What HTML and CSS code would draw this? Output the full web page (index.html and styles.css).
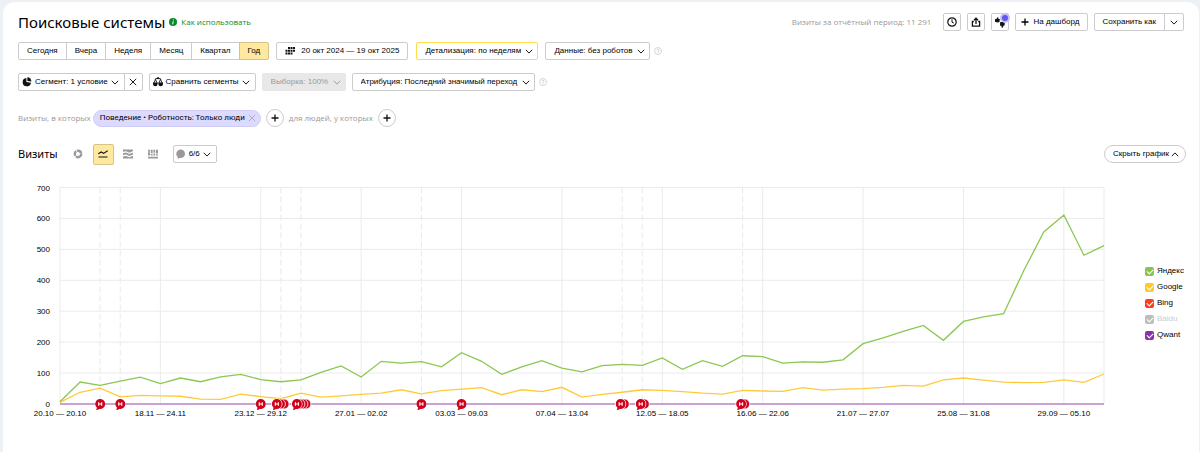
FILE: index.html
```html
<!DOCTYPE html>
<html lang="ru">
<head>
<meta charset="utf-8">
<title>Поисковые системы</title>
<link rel="stylesheet" href="styles.css">
</head>
<body>
<svg class="defs" aria-hidden="true">
  <symbol id="chevron" viewBox="0 0 8 5"><path d="M.8.8 4 4.1 7.2.8" fill="none" stroke="currentColor" stroke-width=".9"/></symbol>
  <symbol id="cross" viewBox="0 0 8 8"><path d="M.8.8l6.4 6.4M7.2.8.8 7.2" fill="none" stroke="currentColor" stroke-width=".9"/></symbol>
  <symbol id="plus" viewBox="0 0 8 8"><path d="M4 .5v7M.5 4h7" fill="none" stroke="currentColor" stroke-width="1.3"/></symbol>
  <symbol id="help" viewBox="0 0 8 8"><circle cx="4" cy="4" r="3.5" fill="none" stroke="#ccc" stroke-width=".8"/><path d="M2.9 3.2c.1-1.4 2.2-1.2 2.1 0 0 .8-1 .8-1 1.6M4 5.3v.8" fill="none" stroke="#bbb" stroke-width=".7"/></symbol>
  <symbol id="note" viewBox="-5 -5 10 12"><path d="M-5 0a5 5 0 1 1 4 4.900q-1 1.100-3 1.100l.8-2.300a5 5 0 0 1-1.800-3.700z" fill="#d0021b"/><path d="M-1.500-1.700v3.400M1.500-1.700v3.400M-1.500 0h3" stroke="#fff" stroke-width="1.100"/></symbol>
</svg>
<main class="card">
  <header class="header">
    <h1 class="title">Поисковые системы</h1>
    <a class="howto" href="#"><svg class="icon-info" viewBox="0 0 8 8"><circle cx="4" cy="4" r="4" fill="#098a28"/><path d="M4.500 1.500l-.1.900M4.200 3.300 3.700 6.300" stroke="#fff" stroke-width="1"/></svg>Как использовать</a>
    <div class="actions">
      <span class="period">Визиты за отчётный период: 11 291</span>
      <button class="btn square" aria-label="История"><svg class="icon10" viewBox="0 0 10 10"><circle cx="5" cy="5" r="4.200" fill="none" stroke="#111" stroke-width="1.200"/><path d="M5 2.300V5.200l1.800.8" fill="none" stroke="#111"/></svg></button>
      <button class="btn square" aria-label="Поделиться"><svg class="icon10" viewBox="0 0 10 10"><path d="M2.800 4.500H1.400v4.700h7.200V4.500H7.200M5 7V1.800M3 3.200l2-2 2 2" fill="none" stroke="#111" stroke-width="1.300"/></svg></button>
      <button class="btn square rate" aria-label="Оценить"><svg class="icon12" viewBox="0 0 12 12"><path d="M1 3.300 2.600 2.800 3.400 1.200l1 .3v1.400h1.400l-.3 3-1.800.5L1 5.800z" fill="#111"/><path d="M6.200 6h4.500v3.200L9.500 9.800l-.8 1.900-1.200-.3V9.700H6z" fill="#111"/></svg><span class="badge"></span></button>
      <button class="btn dash"><svg class="icon8"><use href="#plus"/></svg>На дашборд</button>
      <div class="joined"><button class="btn save">Сохранить как</button><button class="btn arrow" aria-label="Варианты сохранения"><svg class="chev"><use href="#chevron"/></svg></button></div>
    </div>
  </header>

  <div class="row">
    <div class="joined tabs">
      <button class="btn">Сегодня</button><button class="btn">Вчера</button><button class="btn">Неделя</button><button class="btn">Месяц</button><button class="btn">Квартал</button><button class="btn active">Год</button>
    </div>
    <button class="btn dates"><svg class="icon10" viewBox="0 0 10 8"><path d="M3 0h2v2H3zM5.500 0h2v2h-2zM8 0h2v2H8zM.5 2.700h2v2h-2zM3 2.700h2v2H3zM5.500 2.700h2v2h-2zM8 2.700h2v2H8zM.5 5.400h2v2h-2zM3 5.400h2v2H3zM5.500 5.400h2v2h-2z" fill="#111"/></svg>20 окт 2024 — 19 окт 2025</button>
    <span class="drop accent"><select aria-label="Детализация"><option>Детализация: по неделям</option></select><svg class="chev"><use href="#chevron"/></svg></span>
    <span class="drop"><select aria-label="Данные"><option>Данные: без роботов</option></select><svg class="chev"><use href="#chevron"/></svg></span>
    <svg class="icon8 help"><use href="#help"/></svg>
  </div>

  <div class="row second">
    <div class="joined">
      <button class="btn segment"><svg class="icon10" viewBox="0 0 10 10"><path d="M4.400 1A4.200 4.200 0 1 0 9 5.800L4.400 5z" fill="#111"/><path d="M5.400.2A4 4 0 0 1 9.300 4.600L5.400 4z" fill="#111"/></svg>Сегмент: 1 условие<svg class="chev"><use href="#chevron"/></svg></button><button class="btn clear" aria-label="Сбросить"><svg class="icon8"><use href="#cross"/></svg></button>
    </div>
    <button class="btn compare"><svg class="icon10" viewBox="0 0 10 10"><path d="M2.500 2.400 .8 6.200M2.500 2.400l1.600 3.800M7.500 2.400 5.900 6.200M7.500 2.400l1.700 3.800" fill="none" stroke="#111" stroke-width=".9"/><path d="M1.800 2.300 5 1l3.200 1.300" fill="none" stroke="#111" stroke-width="1"/><circle cx="5" cy="1.200" r="1" fill="#111"/><path d="M0 5.600h4.600v1.400a2.300 2.300 0 0 1-4.600 0zM5.400 5.600H10v1.400a2.300 2.300 0 0 1-4.600 0z" fill="#111"/></svg>Сравнить сегменты<svg class="chev"><use href="#chevron"/></svg></button>
    <span class="drop off"><select aria-label="Выборка" disabled><option>Выборка: 100%</option></select><svg class="chev"><use href="#chevron"/></svg></span>
    <span class="drop"><select aria-label="Атрибуция"><option>Атрибуция: Последний значимый переход</option></select><svg class="chev"><use href="#chevron"/></svg></span>
    <svg class="icon8 help"><use href="#help"/></svg>
  </div>

  <div class="row filters">
    <span>Визиты, в которых</span>
    <span class="chip">Поведение • Роботность: Только люди<button class="chip-close" aria-label="Удалить условие"><svg class="icon8"><use href="#cross"/></svg></button></span>
    <button class="round" aria-label="Добавить условие"><svg class="icon8"><use href="#plus"/></svg></button>
    <span>для людей, у которых</span>
    <button class="round" aria-label="Добавить условие для людей"><svg class="icon8"><use href="#plus"/></svg></button>
  </div>

  <div class="row chartbar">
    <h2 class="subtitle">Визиты</h2>
    <div class="kinds">
      <button class="kind" aria-label="Круговая диаграмма"><svg class="icon10" viewBox="0 0 10 10"><circle cx="5" cy="5" r="3.200" fill="none" stroke="#999" stroke-width="2.400" stroke-dasharray="7 .8 5 .8 5.700 .8"/></svg></button>
      <button class="kind active" aria-label="Линии"><svg class="icon10" viewBox="0 0 10 10"><path d="M.3 4.700 3.300 3l2.300 1.400L9.700 1.800M.5 8h9" fill="none" stroke="#111" stroke-width="1.200"/></svg></button>
      <button class="kind" aria-label="Области"><svg class="icon10" viewBox="0 0 10 10"><path d="M0 .5h10v1.500L6.500 3.800 3 2.300 0 2.800zM0 4.200l3-.6L6.500 5.100 10 3.400v2L6.500 7 3 5.500 0 6.100zM0 9.500V7.500L3 6.900l3.500 1.400L10 6.800v2.700z" fill="#999"/></svg></button>
      <button class="kind" aria-label="Столбцы"><svg class="icon10" viewBox="0 0 10 10"><path d="M0 .7h2v2H0zM0 3.300h2v3.300H0zM2.800.7h1.800v3.600H2.800zM2.800 5h1.800v1.600H2.800zM5.400.7h1.800v3H5.400zM5.400 4.500h1.800v2.100H5.400zM8 .7h2v3.900H8zM8 5.300h2v1.300H8zM0 7.800h10v1.700H0z" fill="#999"/></svg></button>
    </div>
    <button class="btn notes"><svg class="icon10" viewBox="0 0 10 10"><path d="M5 .5a4.300 4.300 0 1 1-1.200 8.500Q2.800 9.800 1.500 9.800L2 8.200A4.300 4.300 0 0 1 5 .5z" fill="#999"/></svg>6/6<svg class="chev"><use href="#chevron"/></svg></button>
    <button class="hide">Скрыть график<svg class="chev up"><use href="#chevron"/></svg></button>
  </div>

  <section class="chart">
    <svg class="plot" id="plot" viewBox="18 180 1119 240" role="img" aria-label="Визиты по неделям"></svg>
    <div class="legend">
      <label><input type="checkbox" class="c-yandex" checked>Яндекс</label>
      <label><input type="checkbox" class="c-google" checked>Google</label>
      <label><input type="checkbox" class="c-bing" checked>Bing</label>
      <label class="muted"><input type="checkbox" class="c-baidu" checked>Baidu</label>
      <label><input type="checkbox" class="c-qwant" checked>Qwant</label>
    </div>
  </section>
</main>
<script src="chart.js"></script>
</body>
</html>
```
FILE: styles.css
```css
* { box-sizing: border-box; }
body {
  margin: 0;
  padding: 2px 1px 0 3px;
  min-height: 100vh;
  display: flex;
  background: #edf1f6;
  color: #000;
  font: 8px/12px "Liberation Sans", Arial, sans-serif;
}
.defs { position: absolute; width: 0; height: 0; }
.card {
  flex: 1;
  min-width: 0;
  padding: 10px 13px 0 15px;
  background: #fff;
  border-radius: 12px 12px 0 0;
}
button, select, input { font: inherit; color: inherit; margin: 0; }
svg { flex: none; display: block; }
.icon8 { width: 8px; height: 8px; }
.icon10 { width: 10px; height: 10px; }
.icon12 { width: 12px; height: 12px; }
.chev { width: 8px; height: 5px; }
.up { transform: rotate(180deg); }

.header { display: flex; align-items: center; height: 20px; }
.title, .subtitle { margin: 0; font-family: "Noto Sans", "Open Sans", sans-serif; font-weight: 400; }
.title { font-size: 15px; line-height: 20px; }
.howto {
  display: flex;
  align-items: center;
  gap: 4px;
  margin-left: 4px;
  color: #098a28;
  font: 8px/12px "Open Sans", "Noto Sans", sans-serif;
  text-decoration: none;
}
.icon-info { width: 8px; height: 8px; }
.actions { display: flex; align-items: center; gap: 6px; margin-left: auto; padding-right: 2px; }
.period { margin-right: 6px; color: #999; font-family: "Open Sans", "Noto Sans", sans-serif; }

.btn {
  display: flex;
  align-items: center;
  justify-content: center;
  height: 18px;
  padding: 0 8px;
  border: 1px solid #ccc;
  border-radius: 2px;
  background: #fff;
  white-space: nowrap;
}
.square { position: relative; width: 18px; padding: 0; }
.badge {
  position: absolute;
  top: -1px;
  right: -2px;
  width: 10px;
  height: 10px;
  border: 2px solid #c3c1fb;
  border-radius: 50%;
  background: #5f58ee;
}
.dash { gap: 4px; padding: 0 8px 0 5px; }
.joined { display: flex; }
.joined .btn + .btn { margin-left: -1px; border-radius: 0 2px 2px 0; }
.joined .btn:first-child { border-radius: 2px 0 0 2px; }
.joined.tabs .btn:not(:first-child):not(:last-child) { border-radius: 0; }
.arrow { width: 20px; padding: 0; }
.joined .btn.save { padding: 0 8px 0 7px; }
.btn.active { background: #ffe9a0; border-color: #d6c388; }

.row { display: flex; align-items: center; margin-top: 10px; height: 18px; }
.row.second { margin-top: 13px; gap: 6px; }
.dates { gap: 6px; margin: 0 8px 0 7px; }
.drop { position: relative; display: flex; }
.drop select {
  appearance: none;
  height: 18px;
  padding: 0 16px 0 8px;
  border: 1px solid #ccc;
  border-radius: 2px;
  background: #fff;
}
.drop .chev { position: absolute; right: 5px; top: 7px; pointer-events: none; }
.drop.accent { margin-right: 7px; }
.drop.accent select { border-color: #ffdb4d; }
.drop.off { color: #999; }
.drop.off select { background: #e8e8e8; border-color: #e8e8e8; opacity: 1; }
.help { margin-left: 4px; }
.row.second .help { margin-left: -2px; }
.segment { gap: 3px; padding: 0 5px 0 3px; }
.clear { width: 19px; padding: 0; }
.compare { gap: 3px; padding: 0 5px 0 3px; }

.row.filters { margin-top: 18px; color: #999; font-family: "Open Sans", "Noto Sans", sans-serif; }
.chip {
  display: flex;
  align-items: center;
  gap: 3px;
  height: 17px;
  margin: 0 5px 0 2px;
  padding: 0 4px 0 6px;
  border: 1px solid #cfcdf5;
  border-radius: 9px;
  background: #dcdaff;
  color: #000;
  font-family: Roboto, "Noto Sans", sans-serif;
}
.chip-close { padding: 0; border: 0; background: none; color: #aaa8c8; }
.round {
  display: flex;
  align-items: center;
  justify-content: center;
  width: 18px;
  height: 18px;
  padding: 0;
  border: 1px solid #ccc;
  border-radius: 50%;
  background: #fff;
  color: #111;
}
.filters .round + span { margin: 0 5px; }

.row.chartbar { height: 22px; margin-top: 16px; }
.subtitle { font-size: 11px; line-height: 16px; }
.kinds { display: flex; gap: 4px; margin-left: 10px; }
.kind {
  display: flex;
  align-items: center;
  justify-content: center;
  width: 21px;
  height: 21px;
  padding: 0;
  border: 1px solid transparent;
  border-radius: 2px;
  background: none;
}
.kind.active { background: #ffe9a0; border-color: #d6c388; }
.notes { gap: 3px; margin-left: 9px; padding: 0 5px 0 2px; }
.hide {
  display: flex;
  align-items: center;
  gap: 2px;
  height: 18px;
  margin-left: auto;
  padding: 0 6px 0 8px;
  border: 1px solid #ccc;
  border-radius: 9px;
  background: #fff;
}

.chart { display: flex; gap: 8px; margin-top: 15px; }
.plot { flex: 1; min-width: 0; height: auto; }
.plot text { font-size: 8px; fill: #000; }
.legend { display: flex; flex-direction: column; gap: 4px; width: 41px; padding-top: 85px; }
.legend label { display: flex; align-items: center; gap: 3px; height: 12px; }
.legend .muted { color: #ccc; }
.legend input {
  appearance: none;
  display: grid;
  place-items: center;
  flex: none;
  width: 9px;
  height: 9px;
  border-radius: 2px;
}
.legend input::before {
  content: "";
  width: 5px;
  height: 3px;
  margin-bottom: 1px;
  border: solid #fff;
  border-width: 0 0 1px 1px;
  transform: rotate(-45deg);
}
.c-yandex { background: #8bc34a; }
.c-google { background: #ffca28; }
.c-bing { background: #ff3d1f; }
.c-baidu { background: #bdbdbd; }
.c-qwant { background: #8e30a8; }
```
FILE: chart.js
```js
const X0 = 60, X1 = 1104, Y0 = 404, Y1 = 187.5;
const step = (X1 - X0) / 52;
const px = i => X0 + i * step;
const py = v => Y0 - v * (Y0 - Y1) / 700;

const yandex = [7, 71, 60, 74, 87, 66, 84, 72, 88, 96, 79, 72, 78, 102, 123, 87, 138, 132, 137, 120, 166, 138, 96, 120, 140, 116, 104, 124, 128, 125, 149, 112, 140, 122, 156, 153, 132, 136, 135, 143, 195, 214, 235, 254, 206, 267, 282, 292, 431, 556, 611, 481, 512];
const google = [5, 38, 51, 23, 28, 26, 25, 16, 15, 32, 24, 17, 35, 22, 26, 31, 35, 46, 33, 43, 48, 53, 30, 46, 40, 54, 22, 31, 38, 46, 44, 40, 35, 32, 44, 42, 41, 53, 45, 48, 50, 54, 60, 58, 78, 84, 77, 71, 69, 70, 78, 70, 97];

const ticks = ["20.10 — 20.10", "18.11 — 24.11", "23.12 — 29.12", "27.01 — 02.02", "03.03 — 09.03", "07.04 — 13.04", "12.05 — 18.05", "16.06 — 22.06", "21.07 — 27.07", "25.08 — 31.08", "29.09 — 05.10"];
const notes = [[2, 1], [3, 1], [10, 1], [11, 3], [12, 4], [18, 1], [20, 1], [28, 2], [29, 2], [34, 2]];

let out = "";
for (let v = 0; v <= 700; v += 100) {
  out += `<path d="M${X0} ${py(v)}H${X1}" stroke="#ebebeb"/>`;
  out += `<text x="50" y="${py(v) + 3}" text-anchor="end">${v}</text>`;
}
ticks.forEach((t, k) => {
  out += `<path d="M${px(k * 5)} ${Y1}V${Y0}" stroke="#ebebeb"/>`;
  out += `<text x="${px(k * 5)}" y="416" text-anchor="middle">${t}</text>`;
});
out += `<path d="M${X1} ${Y1}V${Y0}" stroke="#ebebeb"/>`;
notes.filter(([i]) => i % 5).forEach(([i]) => {
  out += `<path d="M${px(i)} ${Y1}V${Y0}" stroke="#e9e9e9" stroke-dasharray="6 3"/>`;
});
const line = (data, color) =>
  `<polyline points="${data.map((v, i) => px(i) + "," + py(v)).join(" ")}" fill="none" stroke="${color}" stroke-width="1.3"/>`;
out += line(google, "#ffca3a") + line(yandex, "#8bc751");
out += `<path d="M${X0} ${Y0}H${X1}" stroke="#a14fb5"/>`;
notes.forEach(([i, n]) => {
  const x = px(i) - (n === 1 ? 0 : n === 2 ? 1.5 : 4);
  const gap = n === 4 ? 3 : 3.6;
  for (let k = n - 1; k > 0; k--) {
    out += `<circle cx="${x + k * gap}" cy="${Y0}" r="5" fill="#d0021b" stroke="#fff" stroke-width=".8"/>`;
  }
  if (n > 1) out += `<circle cx="${x}" cy="${Y0}" r="5.600" fill="#fff"/>`;
  out += `<use href="#note" x="${x - 5}" y="${Y0 - 5}" width="10" height="12"/>`;
});
document.getElementById("plot").innerHTML = out;
```
